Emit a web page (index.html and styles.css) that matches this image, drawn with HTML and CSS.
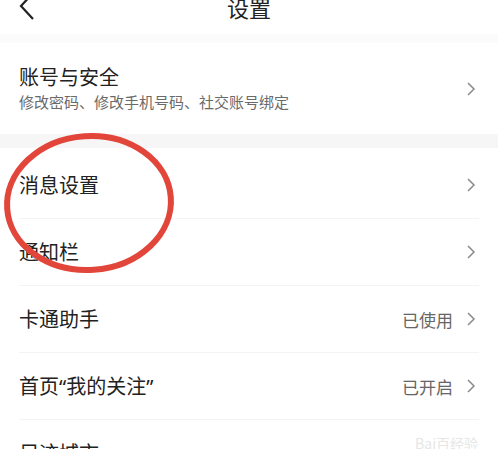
FILE: index.html
```html
<!DOCTYPE html>
<html lang="zh-CN">
<head>
    <meta charset="UTF-8">
    <meta name="viewport" content="width=device-width, initial-scale=1.0">
    <link rel="stylesheet" href="styles.css">
</head>
<body>
    <div class="page">
        <div class="header">
            <svg class="back" width="16" height="28" viewBox="0 0 16 28"><path d="M14 1 L2 14 L14 27" fill="none" stroke="#222" stroke-width="2.2"/></svg>
            <div class="title">设置</div>
        </div>
        <div class="band-light"></div>
        <div class="row row-big">
            <div class="txt">
                <div class="name">账号与安全</div>
                <div class="sub">修改密码、修改手机号码、社交账号绑定</div>
            </div>
            <svg class="arrow" width="10" height="14" viewBox="0 0 10 14"><path d="M2 1 L8 7 L2 13" fill="none" stroke="#8a8a8a" stroke-width="1.5"/></svg>
        </div>
        <div class="band"></div>
        <div class="list">
            <div class="row">
                <div class="name">消息设置</div>
                <svg class="arrow" width="10" height="14" viewBox="0 0 10 14"><path d="M2 1 L8 7 L2 13" fill="none" stroke="#8a8a8a" stroke-width="1.5"/></svg>
            </div>
            <div class="row">
                <div class="name">通知栏</div>
                <svg class="arrow" width="10" height="14" viewBox="0 0 10 14"><path d="M2 1 L8 7 L2 13" fill="none" stroke="#8a8a8a" stroke-width="1.5"/></svg>
            </div>
            <div class="row">
                <div class="name">卡通助手</div>
                <div class="value">已使用</div>
                <svg class="arrow" width="10" height="14" viewBox="0 0 10 14"><path d="M2 1 L8 7 L2 13" fill="none" stroke="#8a8a8a" stroke-width="1.5"/></svg>
            </div>
            <div class="row">
                <div class="name">首页<span class="q">“</span>我的关注<span class="q">”</span></div>
                <div class="value">已开启</div>
                <svg class="arrow" width="10" height="14" viewBox="0 0 10 14"><path d="M2 1 L8 7 L2 13" fill="none" stroke="#8a8a8a" stroke-width="1.5"/></svg>
            </div>
            <div class="row">
                <div class="name">足迹城市</div>
            </div>
        </div>
        <svg class="circle" width="180" height="150" viewBox="0 0 180 150"><ellipse cx="89" cy="75" rx="82" ry="67" fill="none" stroke="#e2463a" stroke-width="6" transform="rotate(-4 89 75)"/></svg>
        <div class="mark">Bai百经验</div>
    </div>
</body>
</html>
```

FILE: styles.css
```css
body {
    margin: 0;
    background: #ffffff;
    font-family: "Noto Sans CJK SC", "Noto Sans", sans-serif;
    color: #222;
    overflow: hidden;
}
.page {
    position: relative;
    width: 498px;
    height: 449px;
    overflow: hidden;
}
.header {
    display: flex;
    align-items: center;
    justify-content: center;
    position: relative;
    height: 48px;
    margin-top: -14px;
}
.back {
    position: absolute;
    left: 19px;
    top: 6px;
}
.title {
    font-size: 22px;
    line-height: 30px;
    margin-top: -6px;
}
.band-light {
    height: 9px;
    background: #fbfbfb;
}
.row {
    display: flex;
    align-items: center;
    height: 67px;
    padding: 0 22px 0 19px;
}
.row-big {
    height: 91px;
}
.txt {
    flex: 1;
    padding-bottom: 3px;
}
.name {
    flex: 1;
    font-size: 20px;
    line-height: 28px;
}
.q {
    font-family: "Noto Sans", sans-serif;
}
.sub {
    font-size: 15px;
    line-height: 20px;
    color: #6a6a6a;
    margin-top: 1px;
}
.value {
    font-size: 17px;
    color: #666;
    margin-right: 13px;
}
.arrow {
    flex-shrink: 0;
}
.band {
    height: 14px;
    background: #f6f6f6;
}
.list {
    padding-top: 3px;
}
.list .row + .row {
    border-top: 1px solid #f4f4f4;
    margin: 0 19px;
    padding: 0 3px 0 0;
    height: 66px;
}
.circle {
    position: absolute;
    left: 0;
    top: 128px;
}
.mark {
    position: absolute;
    right: 20px;
    bottom: -4px;
    font-size: 14px;
    color: #e6e6e6;
}
```
